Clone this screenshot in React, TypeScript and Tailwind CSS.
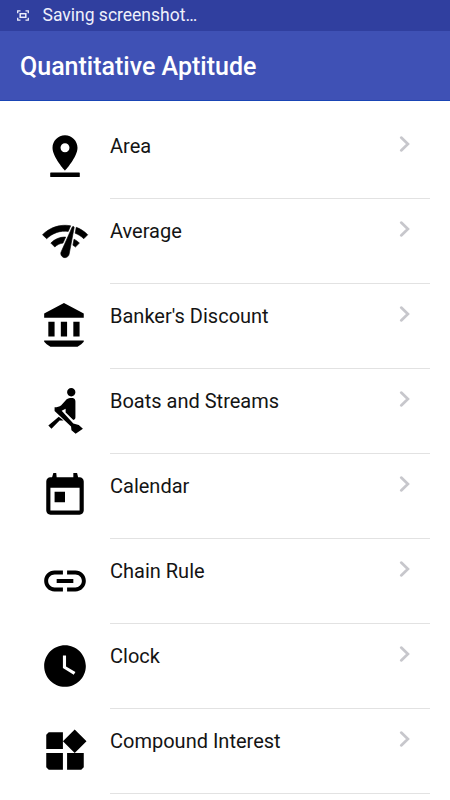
const TOPICS = [
  {
    label: "Area",
    path: "M18 8c0-3.31-2.69-6-6-6S6 4.69 6 8c0 4.5 6 11 6 11s6-6.5 6-11zm-8.150 0c0-1.180.97-2.150 2.150-2.150s2.150.97 2.150 2.150-.97 2.150-2.150 2.150S9.850 9.180 9.850 8zM5.2 19.9c-.2 0-.3.1-.3.3v1.6c0 .2.1.3.3.3h13.6c.2 0 .3-.1.3-.3v-1.6c0-.2-.1-.3-.3-.3z",
  },
  {
    label: "Average",
    stroke: 0.3,
    path: "M15.9 5c-.17 0-.32.09-.41.23l-.07.15-5.18 11.65c-.16.29-.26.61-.26.96 0 1.11.9 2.01 2.01 2.01.96 0 1.77-.68 1.96-1.59l.01-.03L16.4 5.5c0-.28-.22-.5-.5-.5zM1.2 9l2 1.900c2.880-2.780 6.590-3.980 10.330-3.520l1.190-2.680C9.890 3.840 4.940 5.270 1.200 9zm19.800 1.900l1.900-1.900c-1.640-1.640-3.450-2.820-5.490-3.570l-.53 2.820c1.500.62 2.900 1.430 4.120 2.650zm-4 4l1.900-1.900c-.8-.8-1.600-1.420-2.560-1.890l-.55 2.920c.42.27.83.49 1.210.87zM5.200 13l1.900 1.900c1.130-1.130 2.460-1.690 3.930-1.900l1.280-2.880c-2.630-.08-5.100.87-7.110 2.880z",
  },
  {
    label: "Banker's Discount",
    path: "M4 10v7h3v-7H4zM10 10v7h3v-7h-3zM16 10v7h3v-7h-3zM11.5 1L2 6v2h19V6l-9.500-5zM2 19v.6L3.200 20.800 5 22h13l1.800-1.200L21 19.600V19H2z",
  },
  {
    label: "Boats and Streams",
    path: "M15 1c-1.100 0-2 .9-2 2s.9 2 2 2 2-.9 2-2-.9-2-2-2zM12.800 6.300C13.800 5.700 15.600 5.600 16.300 6C16.800 6.300 17 6.800 17 7.400V15C17 15.700 16.700 16.100 16 16.300L12.300 12.700V10.900L10.400 11.900L16 18L18.600 18.700L20.600 20.500L17.100 22.900L15.100 21.200L14.900 19.400L7 12V10.200C8.300 10.200 9.300 9.900 10.200 9.200zM9 14.800L11.300 16.600H9.400L5.500 20.500L4 19z",
  },
  {
    label: "Calendar",
    path: "M19 3h-.700L17.800 1H16v2H8l-.200-2H6.400L5.800 3H5c-1.110 0-1.990.9-1.990 2L3 19c0 1.100.89 2 2 2h14c1.100 0 2-.9 2-2V5c0-1.100-.9-2-2-2zm0 16H5V8h14v11zM7 10h5v5H7z",
  },
  {
    label: "Chain Rule",
    path: "M3.900 12c0-1.710 1.390-3.100 3.100-3.100h4V7H7c-2.760 0-5 2.240-5 5s2.240 5 5 5h4v-1.900H7c-1.710 0-3.100-1.390-3.100-3.100zM8 13h8v-2H8v2zm9-6h-4v1.900h4c1.710 0 3.100 1.390 3.100 3.100s-1.390 3.100-3.100 3.100h-4V17h4c2.760 0 5-2.240 5-5s-2.240-5-5-5z",
  },
  {
    label: "Clock",
    path: "M12 2C6.500 2 2 6.500 2 12s4.500 10 10 10 10-4.500 10-10S17.500 2 12 2zm4.200 14.200L11 13V7h1.500v5.200l4.500 2.700-.8 1.300z",
  },
  {
    label: "Compound Interest",
    path: "M13 13v8h6.800l1.200-1.200V13h-8zM4.200 21H11v-8H3v6.800zM3 4.200V11h8V3H4.200zm13.660-2.510L11 7.340 16.660 13l5.660-5.660-5.660-5.650z",
  },
];

function CaptureIcon() {
  return (
    <svg
      width="12"
      height="11"
      viewBox="0 0 12 11"
      fill="none"
      stroke="currentColor"
      className="shrink-0"
    >
      <path d="M.7 3.200V.8H3.500M8.500.8h2.800v2.400M11.300 7.800v2.400H8.500M3.500 10.200H.7V7.800" strokeWidth="1.300" />
      <rect x="3.200" y="3.700" width="5.600" height="3.600" strokeWidth="1.500" />
    </svg>
  );
}

function StatusBar() {
  return (
    <div className="flex h-[31px] items-center bg-[#303f9f] pl-[17px] text-[#eef0fb]">
      <CaptureIcon />
      <span className="ml-[13.5px] text-[17.5px] leading-[29px]">Saving screenshot…</span>
    </div>
  );
}

type TopicRowProps = { label: string; path: string; stroke?: number };

function TopicRow({ label, path, stroke = 0 }: TopicRowProps) {
  return (
    <li className="flex h-[85px] pl-10">
      <svg
        width="50"
        height="50"
        viewBox="0 0 24 24"
        fill="currentColor"
        stroke="currentColor"
        strokeWidth={stroke}
        strokeLinejoin="round"
        className="mt-[17px] shrink-0 text-black"
      >
        <path d={path} />
      </svg>
      <div className="mr-5 ml-5 flex flex-1 items-start justify-between border-b border-[#e2e2e2]">
        <span className="mt-[17px] text-[20px] leading-[30px]">{label}</span>
        <svg width="12" height="18" viewBox="0 0 12 18" fill="none" className="mt-[21px] mr-[19px]">
          <path
            d="M2.200 2.600L8.900 9 2.200 15.400"
            stroke="#c7c7cc"
            strokeWidth="2.700"
            strokeLinecap="round"
          />
        </svg>
      </div>
    </li>
  );
}

export default function App() {
  return (
    <div className="h-[800px] w-[450px] overflow-hidden bg-white font-[Roboto,sans-serif] text-[#141414]">
      <StatusBar />
      <header className="flex h-[70px] items-center border-b border-[#1a45b5] bg-[#3f51b5] pt-0.5 pl-5">
        <h1 className="text-[25px] leading-8 font-medium text-white">Quantitative Aptitude</h1>
      </header>
      <ul className="pt-[13px]">
        {TOPICS.map((topic) => (
          <TopicRow key={topic.label} {...topic} />
        ))}
      </ul>
    </div>
  );
}
